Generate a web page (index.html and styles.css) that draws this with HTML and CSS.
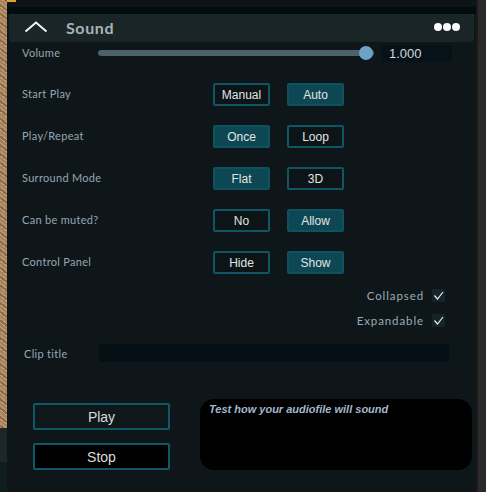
FILE: index.html
```html
<!DOCTYPE html>
<html>
<head>
<meta charset="utf-8">
<link rel="stylesheet" href="styles.css">
</head>
<body>
<div class="frame">
  <div class="edge-left"></div>
  <div class="main">
    <div class="topbar"><span class="marker"></span></div>
    <div class="topgap"></div>
    <div class="header">
      <svg class="chevron" width="24" height="12" viewBox="0 0 24 12"><path d="M1.5 10.5 L12 1.5 L22.5 10.5" fill="none" stroke="#f2f4f4" stroke-width="2"/></svg>
      <span class="title">Sound</span>
      <span class="dots"><i></i><i></i><i></i></span>
    </div>
    <div class="content">
      <div class="volume-row">
        <span class="label">Volume</span>
        <div class="slider"><div class="track"></div><div class="thumb"></div></div>
        <div class="value">1.000</div>
      </div>
      <div class="options">
        <div class="opt-row"><span class="label">Start Play</span><span class="btn">Manual</span><span class="btn on">Auto</span></div>
        <div class="opt-row"><span class="label">Play/Repeat</span><span class="btn on">Once</span><span class="btn">Loop</span></div>
        <div class="opt-row"><span class="label">Surround Mode</span><span class="btn on">Flat</span><span class="btn">3D</span></div>
        <div class="opt-row"><span class="label">Can be muted?</span><span class="btn">No</span><span class="btn on">Allow</span></div>
        <div class="opt-row"><span class="label">Control Panel</span><span class="btn">Hide</span><span class="btn on">Show</span></div>
      </div>
      <div class="checks">
        <div class="check-row"><span class="label">Collapsed</span><span class="box"><svg width="13" height="13" viewBox="0 0 13 13"><path d="M2.5 6.5 L5.5 10 L11 3" fill="none" stroke="#e8eef0" stroke-width="1.2"/></svg></span></div>
        <div class="check-row"><span class="label">Expandable</span><span class="box"><svg width="13" height="13" viewBox="0 0 13 13"><path d="M2.5 6.5 L5.5 10 L11 3" fill="none" stroke="#e8eef0" stroke-width="1.2"/></svg></span></div>
      </div>
      <div class="clip-row">
        <span class="label clip-label">Clip title</span>
        <div class="clip-input"></div>
      </div>
      <div class="bottom">
        <div class="actions">
          <div class="action">Play</div>
          <div class="action stop">Stop</div>
        </div>
        <div class="note">Test how your audiofile will sound</div>
      </div>
    </div>
  </div>
  <div class="edge-right"></div>
</div>
</body>
</html>
```
FILE: styles.css
```css
* { box-sizing: border-box; }
html, body { margin: 0; padding: 0; }
body { width: 486px; height: 492px; overflow: hidden; background: #0f171a; font-family: "Lato", "Liberation Sans", sans-serif; }
.frame { display: flex; width: 486px; height: 492px; }
.edge-left {
  width: 7px; flex: none;
  background:
    linear-gradient(to bottom, transparent 0, transparent 428px, #1d2628 428px, #1d2628 462px, #0f1d1e 462px),
    repeating-linear-gradient(37deg, #a7805c 0 2px, #c79f78 2px 3px, #8d6a4a 3px 5px, #b8926c 5px 7px);
}
.main { flex: 1; display: flex; flex-direction: column; background: #0e1619; }
.edge-right { width: 10px; flex: none; background: linear-gradient(to right, #1a1a1a 0 2px, #2b2929 2px); }
.topbar { height: 7px; background: #0c1417; position: relative; }
.marker { position: absolute; left: 0; top: 0; width: 9px; height: 2px; background: #e3a232; }
.topgap { height: 7px; background: #010d0d; }
.header {
  height: 28px; margin: 0 2px; background: #1a2528; border-radius: 0 0 4px 4px;
  display: flex; align-items: center; padding-left: 15px; padding-right: 14px;
}
.chevron { display: block; margin-top: -3px; }
.title { margin-left: 18px; color: #a7b3b8; font-family: "Lato", sans-serif; font-weight: 700; font-size: 16px; letter-spacing: 0.6px; margin-top: -2px; }
.dots { margin-left: auto; display: flex; gap: 1px; margin-top: -2px; }
.dots i { display: block; width: 8px; height: 8px; border-radius: 50%; background: #fbfbfb; }
.content { padding-left: 15px; display: flex; flex-direction: column; }
.label { color: #95a6b6; font-size: 11px; font-family: "Lato", sans-serif; letter-spacing: 0.3px; }
.volume-row { height: 18px; margin-top: 2px; display: flex; align-items: center; }
.volume-row .label { width: 76px; margin-top: -2px; }
.slider { position: relative; width: 276px; height: 18px; }
.track { position: absolute; left: 0; right: 0; top: 6px; height: 6px; border-radius: 3px; background: #4b626c; }
.thumb { position: absolute; left: 261px; top: 2px; width: 14px; height: 14px; border-radius: 50%; background: #6ca2c4; }
.value { margin-left: 8px; width: 70px; height: 17px; background: #06111a; color: #d6d8d8; font-family: "Liberation Sans", sans-serif; font-size: 13px; padding-left: 7px; line-height: 17px; }
.options { margin-top: 21px; display: flex; flex-direction: column; gap: 19px; }
.opt-row { display: flex; align-items: center; height: 23px; }
.opt-row .label { width: 191px; margin-top: -2px; }
.btn {
  width: 57px; height: 23px; margin-right: 17px; border: 2px solid #0f5563; border-radius: 2px;
  color: #e2e4e4; font-family: "Liberation Sans", sans-serif; font-size: 12px;
  display: flex; align-items: center; justify-content: center; background: #0c1417;
}
.btn.on { background: #0d4753; border-color: #0e5260; }
.checks { margin-top: 15px; display: flex; flex-direction: column; align-items: flex-end; gap: 12px; padding-right: 31px; }
.check-row { display: flex; align-items: center; height: 13px; }
.check-row .label { font-size: 11.5px; margin-right: 8px; color: #9aabbb; letter-spacing: 0.9px; }
.box { width: 13px; height: 13px; background: #14252a; display: block; }
.box svg { display: block; }
.clip-row { margin-top: 17px; display: flex; align-items: center; height: 18px; }
.clip-label { width: 77px; padding-left: 2px; }
.clip-input { width: 350px; height: 18px; background: #040f15; border-radius: 2px; }
.bottom { margin-top: 37px; display: flex; align-items: flex-start; }
.actions { margin-left: 11px; margin-top: 4px; display: flex; flex-direction: column; gap: 13px; }
.action {
  width: 137px; height: 27px; border: 2px solid #115866; border-radius: 2px; background: #0f171a;
  color: #dadcdc; font-family: "Liberation Sans", sans-serif; font-size: 14px;
  display: flex; align-items: center; justify-content: center;
}
.action.stop { background: #000; }
.note {
  margin-left: 30px; width: 272px; height: 71px; background: #000; border-radius: 14px;
  color: #a3b7cc; font-family: "Liberation Sans", sans-serif; font-weight: 700; font-style: italic; font-size: 11px;
  padding: 4px 0 0 9px;
}
```
